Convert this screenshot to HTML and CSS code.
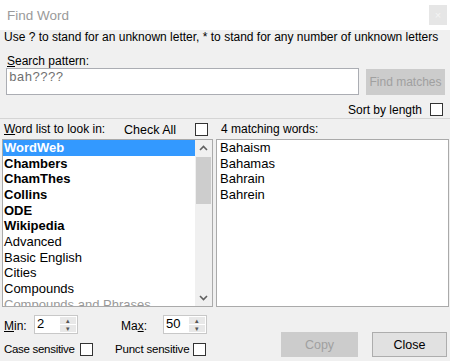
FILE: index.html
```html
<!DOCTYPE html>
<html lang="en">
<head>
    <meta charset="UTF-8">
    <title>Find Word</title>
    <link rel="stylesheet" href="styles.css">
</head>
<body>
    <div class="titlebar">
        <span class="title">Find Word</span>
        <span class="close-x">&times;</span>
    </div>

    <div class="dialog">
        <div class="hint">Use ? to stand for an unknown letter, * to stand for any number of unknown letters</div>

        <div class="search-label"><u>S</u>earch pattern:</div>
        <div class="search-row">
            <div class="pattern">bah????</div>
            <div class="btn disabled find-btn">Find matches</div>
        </div>

        <div class="sort-row">
            <span>Sort by length</span>
            <span class="check"></span>
        </div>

        <div class="separator"></div>

        <div class="list-head">
            <div class="head-left">
                <span><u>W</u>ord list to look in:</span>
                <span class="check-all">Check All</span>
                <span class="check"></span>
            </div>
            <div class="head-right">4 matching words:</div>
        </div>

        <div class="lists">
            <div class="listbox word-lists">
                <div class="items">
                    <div class="item bold selected">WordWeb</div>
                    <div class="item bold">Chambers</div>
                    <div class="item bold">ChamThes</div>
                    <div class="item bold">Collins</div>
                    <div class="item bold">ODE</div>
                    <div class="item bold">Wikipedia</div>
                    <div class="item">Advanced</div>
                    <div class="item">Basic English</div>
                    <div class="item">Cities</div>
                    <div class="item">Compounds</div>
                    <div class="item faded">Compounds and Phrases</div>
                </div>
                <div class="scrollbar">
                    <svg class="arrow" width="17" height="17" viewBox="0 0 17 17"><path d="M5 10 L8.5 6.5 L12 10" fill="none" stroke="#606060" stroke-width="1.6"/></svg>
                    <div class="track"><div class="thumb"></div></div>
                    <svg class="arrow" width="17" height="17" viewBox="0 0 17 17"><path d="M5 7 L8.5 10.5 L12 7" fill="none" stroke="#606060" stroke-width="1.6"/></svg>
                </div>
            </div>
            <div class="listbox matches">
                <div class="item">Bahaism</div>
                <div class="item">Bahamas</div>
                <div class="item">Bahrain</div>
                <div class="item">Bahrein</div>
            </div>
        </div>

        <div class="bottom">
            <div class="options">
                <div class="spin-row">
                    <span class="spin-label"><u>M</u>in:</span>
                    <div class="spin">
                        <span class="spin-value">2</span>
                        <div class="spin-btns">
                            <span class="spin-btn">&#9652;</span>
                            <span class="spin-btn">&#9662;</span>
                        </div>
                    </div>
                    <span class="spin-label max-label">Ma<u>x</u>:</span>
                    <div class="spin">
                        <span class="spin-value">50</span>
                        <div class="spin-btns">
                            <span class="spin-btn">&#9652;</span>
                            <span class="spin-btn">&#9662;</span>
                        </div>
                    </div>
                </div>
                <div class="sense-row">
                    <span class="case">Case sensitive</span>
                    <span class="check"></span>
                    <span class="punct">Punct sensitive</span>
                    <span class="check"></span>
                </div>
            </div>
            <div class="buttons">
                <div class="btn disabled copy-btn">Copy</div>
                <div class="btn close-btn">Close</div>
            </div>
        </div>
    </div>
</body>
</html>
```

FILE: styles.css
```css
body {
    margin: 0;
    width: 450px;
    height: 361px;
    overflow: hidden;
    font-family: "Liberation Sans", Arial, sans-serif;
    font-size: 12px;
    color: #000;
    background: #f0f0f0;
}
u {
    text-decoration: underline;
    text-underline-offset: 1px;
}
.titlebar {
    height: 30px;
    background: #fff;
    display: flex;
    align-items: center;
    justify-content: space-between;
    padding: 0 3px 0 7px;
}
.title {
    font-size: 13.5px;
    color: #9a9a9a;
}
.close-x {
    width: 18px;
    height: 20px;
    background: #e6e6e6;
    color: #f4f4f4;
    font-size: 11px;
    text-align: center;
    line-height: 20px;
}
.dialog {
    padding: 0 0 0 4px;
}
.hint {
    line-height: 15px;
    white-space: nowrap;
}
.search-label {
    margin-top: 10px;
    padding-left: 3px;
    line-height: 13px;
}
.search-row {
    display: flex;
    align-items: flex-start;
    margin-left: 2px;
}
.pattern {
    width: 349px;
    height: 25px;
    background: #fff;
    border: 1px solid #abadb3;
    font-family: "Liberation Mono", "Courier New", monospace;
    font-size: 13px;
    color: #707070;
    padding-left: 2px;
    line-height: 17px;
}
.btn {
    display: flex;
    align-items: center;
    justify-content: center;
    box-sizing: border-box;
    white-space: nowrap;
}
.disabled {
    background: #cccccc;
    color: #a0a0a0;
}
.find-btn {
    margin: 1px 0 0 7px;
    width: 79px;
    height: 26px;
}
.sort-row {
    display: flex;
    justify-content: flex-end;
    align-items: center;
    gap: 8px;
    margin-top: 8px;
    padding-right: 7px;
    height: 13px;
}
.check {
    width: 13px;
    height: 13px;
    flex: none;
    box-sizing: border-box;
    background: #fff;
    border: 1px solid #333;
    display: inline-block;
}
.separator {
    height: 1px;
    background: #d5d5d5;
    margin: 2px 0 0 -4px;
}
.list-head {
    display: grid;
    grid-template-columns: 213px 1fr;
    height: 20px;
    align-items: center;
}
.head-left {
    display: grid;
    grid-template-columns: 120px 1fr 13px;
    align-items: center;
    padding-right: 9px;
}
.check-all {
    position: relative;
    top: 1px;
    font-size: 12.5px;
}
.head-right {
    padding-left: 4px;
}
.lists {
    display: grid;
    grid-template-columns: 211px 233px;
    gap: 3px;
    margin-left: -2px;
    height: 168px;
}
.listbox {
    background: #fff;
    border: 1px solid #aaaaaa;
    overflow: hidden;
    font-size: 13px;
}
.word-lists {
    display: flex;
}
.items {
    flex: 1;
    overflow: hidden;
}
.item {
    line-height: 15.65px;
    padding-left: 1px;
    white-space: nowrap;
}
.bold {
    font-weight: bold;
}
.selected {
    background: #3399ff;
    color: #fff;
}
.faded {
    color: #999;
}
.matches {
    padding-left: 2px;
}
.scrollbar {
    width: 17px;
    background: #f0f0f0;
    display: flex;
    flex-direction: column;
}
.arrow {
    display: block;
}
.track {
    flex: 1;
}
.thumb {
    margin: 0 1px;
    height: 47px;
    background: #cdcdcd;
}
.bottom {
    display: flex;
    justify-content: space-between;
    align-items: flex-end;
}
.options {
    padding-top: 8px;
}
.spin-row {
    display: flex;
    align-items: center;
    height: 19px;
}
.spin-label {
    width: 30px;
    padding-top: 2px;
}
.max-label {
    margin-left: 43px;
    width: 42px;
}
.spin {
    width: 44px;
    height: 19px;
    box-sizing: border-box;
    background: #fff;
    border: 1px solid #c8c8c8;
    display: flex;
    justify-content: space-between;
}
.spin-value {
    padding-left: 2px;
    line-height: 16px;
    font-size: 13px;
}
.spin-btns {
    display: flex;
    flex-direction: column;
    width: 16px;
    padding: 1px 1px 1px 0;
    gap: 1px;
}
.spin-btn {
    flex: 1;
    background: #e8e8e8;
    font-size: 7px;
    line-height: 8px;
    text-align: center;
    color: #555;
    overflow: hidden;
}
.sense-row {
    display: grid;
    grid-template-columns: 76px 13px 100px 13px;
    align-items: center;
    margin-top: 8px;
    height: 14px;
    padding-bottom: 2px;
    white-space: nowrap;
    font-size: 11.5px;
}
.case {
    letter-spacing: -0.3px;
}
.punct {
    padding-left: 22px;
    letter-spacing: -0.2px;
}
.buttons {
    display: flex;
    gap: 14px;
    padding-right: 3px;
    padding-bottom: 1px;
}
.copy-btn {
    width: 77px;
    height: 25px;
    font-size: 12.5px;
}
.close-btn {
    width: 75px;
    height: 25px;
    font-size: 12.5px;
    background: #e1e1e1;
    border: 1px solid #adadad;
}
```
